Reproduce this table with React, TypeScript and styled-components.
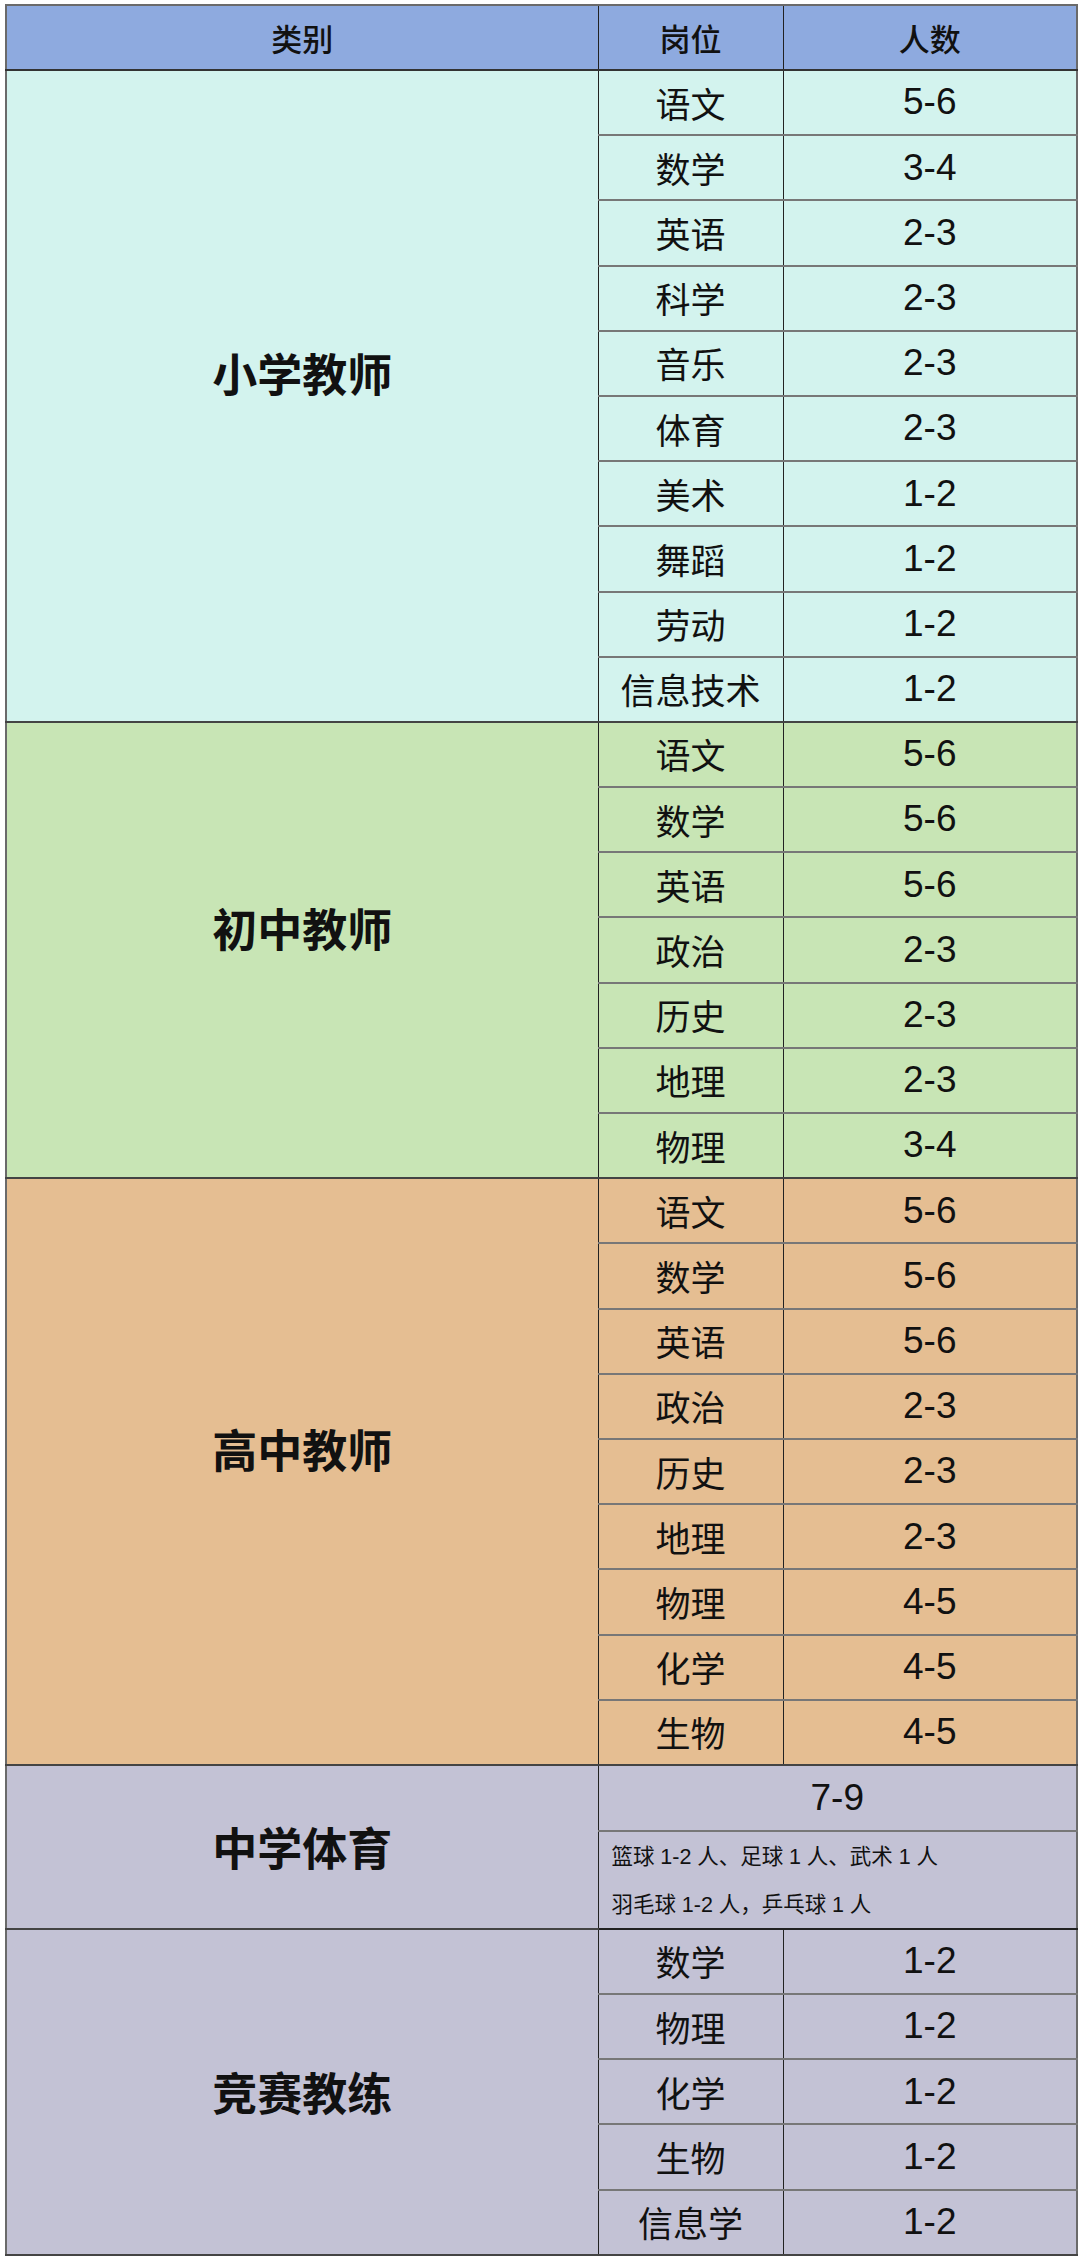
import React from "react";
import styled, { createGlobalStyle } from "styled-components";

const GlobalStyle = createGlobalStyle`
  html, body {
    margin: 0;
    padding: 0;
    background: #ffffff;
  }
  body {
    font-family: "Noto Sans CJK SC", "Noto Sans", sans-serif;
    color: #111;
  }
`;

interface Group {
  title: string;
  color: string;
  lift?: boolean;
  rows: [string, string][];
}

const groups: Group[] = [
  {
    title: "小学教师",
    color: "#d3f3ee",
    lift: true,
    rows: [
      ["语文", "5-6"],
      ["数学", "3-4"],
      ["英语", "2-3"],
      ["科学", "2-3"],
      ["音乐", "2-3"],
      ["体育", "2-3"],
      ["美术", "1-2"],
      ["舞蹈", "1-2"],
      ["劳动", "1-2"],
      ["信息技术", "1-2"],
    ],
  },
  {
    title: "初中教师",
    color: "#c8e5b5",
    lift: true,
    rows: [
      ["语文", "5-6"],
      ["数学", "5-6"],
      ["英语", "5-6"],
      ["政治", "2-3"],
      ["历史", "2-3"],
      ["地理", "2-3"],
      ["物理", "3-4"],
    ],
  },
  {
    title: "高中教师",
    color: "#e5be92",
    lift: true,
    rows: [
      ["语文", "5-6"],
      ["数学", "5-6"],
      ["英语", "5-6"],
      ["政治", "2-3"],
      ["历史", "2-3"],
      ["地理", "2-3"],
      ["物理", "4-5"],
      ["化学", "4-5"],
      ["生物", "4-5"],
    ],
  },
];

const contest: Group = {
  title: "竞赛教练",
  color: "#c3c2d5",
  rows: [
    ["数学", "1-2"],
    ["物理", "1-2"],
    ["化学", "1-2"],
    ["生物", "1-2"],
    ["信息学", "1-2"],
  ],
};

const Table = styled.table`
  margin: 4px 0 0 5px;
  width: 1071px;
  border-collapse: collapse;
  table-layout: fixed;
  border: 2px solid #6a6a6a;
`;

const HeadRow = styled.tr`
  height: 65px;
  background: #8eaadf;
`;

const HeadCell = styled.th<{ $first?: boolean }>`
  font-size: 31px;
  font-weight: 500;
  text-align: center;
  border-left: ${(p) => (p.$first ? "none" : "1.5px solid #222")};
  border-bottom: 2px solid #333;
  padding: 0;
`;

const BodyRow = styled.tr<{ $h?: number }>`
  height: ${(p) => p.$h ?? 65}px;
`;

const GroupCell = styled.td<{ $bg: string; $lift?: boolean }>`
  background: ${(p) => p.$bg};
  font-size: 45px;
  font-weight: 700;
  text-align: center;
  vertical-align: middle;
  border-bottom: 2px solid #444;
  padding: 0 0 ${(p) => (p.$lift ? "46px" : "0")} 0;
`;

const SubjectCell = styled.td<{ $bg: string; $last: boolean }>`
  background: ${(p) => p.$bg};
  font-size: 35px;
  font-weight: 400;
  line-height: 1.2;
  text-align: center;
  border-left: 1.5px solid #222;
  border-bottom: 2px solid ${(p) => (p.$last ? "#444" : "#777")};
  padding: 0;
`;

const CountCell = styled.td<{ $bg: string; $last: boolean }>`
  background: ${(p) => p.$bg};
  font-family: "Liberation Sans", Arial, sans-serif;
  font-size: 37px;
  line-height: 1.2;
  text-align: center;
  border-left: 1.5px solid #222;
  border-bottom: 2px solid ${(p) => (p.$last ? "#444" : "#777")};
  padding: 0;
`;

const NoteCell = styled.td`
  background: #c3c2d5;
  font-size: 21.5px;
  line-height: 46px;
  text-align: left;
  vertical-align: middle;
  padding: 0 0 0 13px;
  border-left: 1.5px solid #222;
  border-bottom: 2px solid #222;
  word-spacing: 1px;
`;

const Num = styled.span`
  font-family: "Liberation Sans", Arial, sans-serif;
`;

const GroupRows: React.FC<{ group: Group }> = ({ group }) => (
  <>
    {group.rows.map(([subject, count], i) => {
      const last = i === group.rows.length - 1;
      return (
        <BodyRow key={i} $h={65.2}>
          {i === 0 && (
            <GroupCell
              rowSpan={group.rows.length}
              $bg={group.color}
              $lift={group.lift}
            >
              {group.title}
            </GroupCell>
          )}
          <SubjectCell $bg={group.color} $last={last}>
            {subject}
          </SubjectCell>
          <CountCell $bg={group.color} $last={last}>
            {count}
          </CountCell>
        </BodyRow>
      );
    })}
  </>
);

export default function App() {
  return (
    <>
      <GlobalStyle />
      <Table>
        <colgroup>
          <col style={{ width: 592 }} />
          <col style={{ width: 185 }} />
          <col style={{ width: 294 }} />
        </colgroup>
        <thead>
          <HeadRow>
            <HeadCell $first>类别</HeadCell>
            <HeadCell>岗位</HeadCell>
            <HeadCell>人数</HeadCell>
          </HeadRow>
        </thead>
        <tbody>
          {groups.map((g) => (
            <GroupRows key={g.title} group={g} />
          ))}
          <BodyRow $h={66}>
            <GroupCell rowSpan={2} $bg="#c3c2d5">
              中学体育
            </GroupCell>
            <CountCell colSpan={2} $bg="#c3c2d5" $last={false}>
              7-9
            </CountCell>
          </BodyRow>
          <BodyRow $h={97}>
            <NoteCell colSpan={2}>
              篮球 <Num>1-2</Num> 人、足球 <Num>1</Num> 人、武术 <Num>1</Num> 人
              <br />
              羽毛球 <Num>1-2</Num> 人，乒乓球 <Num>1</Num> 人
            </NoteCell>
          </BodyRow>
          <GroupRows group={contest} />
        </tbody>
      </Table>
    </>
  );
}
